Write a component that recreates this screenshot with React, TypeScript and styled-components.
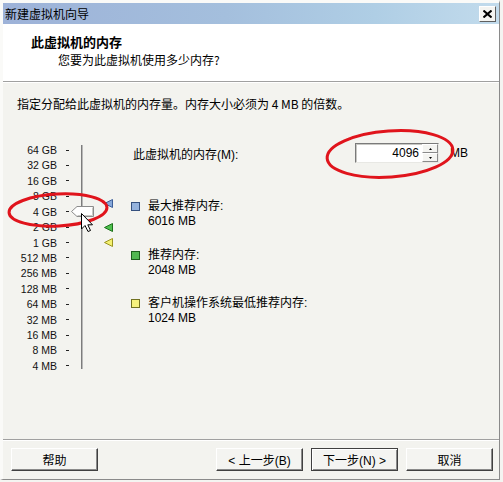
import React from "react";
import styled, { createGlobalStyle } from "styled-components";

const Global = createGlobalStyle`
  html, body { margin: 0; padding: 0; background: #f4f4f1; }
  body { font-family: "Liberation Sans", "Noto Sans CJK SC", sans-serif; font-size: 12px; color: #000; }
`;

const ROW_H = 15.43;
const TOP_EXP = 16; // 64 GB = 2^16 MB

const Window = styled.div`
  position: relative;
  box-sizing: border-box;
  width: 500px;
  height: 480px;
  display: flex;
  flex-direction: column;
  background: #f3f3ef;
  border-left: 3px solid #fafaf8;
  border-top: 3px solid #fafaf8;
  border-right: 1px solid #8a8a8a;
  border-bottom: 1px solid #8a8a8a;
`;

const TitleBar = styled.div`
  height: 21px;
  flex: none;
  display: flex;
  align-items: center;
  justify-content: space-between;
  padding: 0 3px 0 2px;
  background: linear-gradient(to right, #9db2d8 0%, #a4bfdd 45%, #afcee5 75%, #c2dbec 100%);
  font-family: "Noto Sans CJK SC", sans-serif;
  font-size: 12px;
  line-height: 21px;
`;

const CloseButton = styled.div`
  box-sizing: border-box;
  width: 17px;
  height: 16px;
  display: flex;
  align-items: center;
  justify-content: center;
  background: #f4f4f1;
  border-top: 1px solid #ffffff;
  border-left: 1px solid #ffffff;
  border-right: 1px solid #606060;
  border-bottom: 1px solid #606060;
`;

const Header = styled.div`
  height: 57px;
  flex: none;
  box-sizing: border-box;
  background: #ffffff;
  padding: 10px 0 0 28px;
  font-family: "Noto Sans CJK SC", sans-serif;
`;

const HeaderTitle = styled.div`
  font-weight: 700;
  font-size: 13px;
  line-height: 16px;
`;

const HeaderSub = styled.div`
  margin: 2px 0 0 27px;
  font-size: 12px;
  line-height: 16px;
`;

const Separator = styled.div`
  flex: none;
  height: 0;
  border-top: 1px solid #a0a0a0;
  border-bottom: 1px solid #ffffff;
`;

const Body = styled.div`
  flex: 1;
  padding: 13px 0 0 0;
`;

const Instruction = styled.div`
  padding-left: 14px;
  line-height: 16px;
  font-family: "Noto Sans CJK SC", sans-serif;
`;

const Main = styled.div`
  margin-top: 18px;
  display: grid;
  grid-template-columns: 128px 339px;
`;

const ScaleArea = styled.div`
  display: flex;
  padding-top: 12.3px;
`;

const Labels = styled.div`
  display: flex;
  flex-direction: column;
  width: 67px;
`;

const ScaleRow = styled.div`
  height: ${ROW_H}px;
  display: flex;
  align-items: center;
`;

const ScaleLabel = styled.span`
  width: 54px;
  text-align: right;
  font-size: 10.5px;
  color: #111;
`;

const Tick = styled.span`
  margin-left: 9px;
  width: 3px;
  height: 1px;
  background: #222;
`;

const Slider = styled.div`
  position: relative;
  width: 50px;
`;

const Rail = styled.div`
  margin: 2.7px 0 0 11px;
  width: 1px;
  height: 224px;
  background: #7c7c7c;
  border-right: 1px solid #b8b8b8;
`;

const Thumb = styled.svg`
  position: absolute;
  left: 1px;
  width: 23px;
  height: 11px;
`;

const Marker = styled.svg`
  position: absolute;
  left: 34px;
  width: 9px;
  height: 9px;
`;

const Right = styled.div`
  padding-top: 13px;
`;

const MemRow = styled.div`
  display: flex;
  align-items: center;
  height: 20px;
`;

const MemLabel = styled.span`
  flex: 1;
  padding-left: 2px;
  font-family: "Liberation Sans", "Noto Sans CJK SC", sans-serif;
`;

const SpinBox = styled.div`
  box-sizing: border-box;
  width: 84px;
  height: 20px;
  display: flex;
  background: #fff;
  border-top: 1px solid #7a7a7a;
  border-left: 1px solid #7a7a7a;
  border-right: 1px solid #e8e8e4;
  border-bottom: 1px solid #e8e8e4;
  box-shadow: inset 1px 1px 0 #c8c8c4;
`;

const SpinValue = styled.span`
  flex: 1;
  text-align: right;
  padding-right: 3px;
  line-height: 18px;
  font-size: 12px;
`;

const SpinButtons = styled.div`
  width: 16px;
  display: flex;
  flex-direction: column;
`;

const SpinButton = styled.div`
  box-sizing: border-box;
  flex: 1;
  display: flex;
  align-items: center;
  justify-content: center;
  background: #f4f4f1;
  border-top: 1px solid #ffffff;
  border-left: 1px solid #ffffff;
  border-right: 1px solid #8a8a8a;
  border-bottom: 1px solid #8a8a8a;
`;

const Unit = styled.span`
  margin-left: 11px;
  width: 20px;
`;

const Legend = styled.div`
  margin-top: 36px;
  display: flex;
  flex-direction: column;
  gap: 18.5px;
`;

const LegendItem = styled.div`
  display: grid;
  grid-template-columns: 17px auto;
  line-height: 15px;
`;

const Swatch = styled.span<{ $fill: string; $edge: string }>`
  box-sizing: border-box;
  width: 9px;
  height: 9px;
  margin-top: 3px;
  background: ${(p) => p.$fill};
  border: 1px solid ${(p) => p.$edge};
`;

const LegendTitle = styled.span`
  font-family: "Liberation Sans", "Noto Sans CJK SC", sans-serif;
`;

const LegendValue = styled.span`
  grid-column: 2;
`;

const Footer = styled.div`
  flex: none;
  height: 38px;
  box-sizing: border-box;
  padding: 7px 6px 0 8px;
  display: flex;
  gap: 8px;
`;

const Spacer = styled.div`
  flex: 1;
`;

const Button = styled.div<{ $default?: boolean }>`
  box-sizing: border-box;
  width: 87px;
  height: 23px;
  display: flex;
  align-items: center;
  justify-content: center;
  background: #f4f4f1;
  font-family: "Liberation Sans", "Noto Sans CJK SC", sans-serif;
  font-size: 12px;
  border-top: 1px solid ${(p) => (p.$default ? "#404040" : "#ffffff")};
  border-left: 1px solid ${(p) => (p.$default ? "#404040" : "#ffffff")};
  border-right: 1px solid #404040;
  border-bottom: 1px solid #404040;
  box-shadow: ${(p) =>
    p.$default
      ? "inset 1px 1px 0 #ffffff, inset -1px -1px 0 #8a8a8a"
      : "inset -1px -1px 0 #8a8a8a"};
`;

const Overlay = styled.svg`
  position: absolute;
  left: -3px;
  top: -3px;
  width: 503px;
  height: 482px;
  pointer-events: none;
`;

const scale = [
  "64 GB", "32 GB", "16 GB", "8 GB", "4 GB", "2 GB", "1 GB",
  "512 MB", "256 MB", "128 MB", "64 MB", "32 MB", "16 MB", "8 MB", "4 MB",
];

const posFor = (mb: number) => (TOP_EXP - Math.log2(mb) + 0.5) * ROW_H;

const markers = [
  { mb: 6016, fill: "#86a8da", edge: "#3c5e9a" },
  { mb: 2048, fill: "#4ec04e", edge: "#1c701c" },
  { mb: 1024, fill: "#f4f070", edge: "#9a9420" },
];

const legend = [
  { title: "最大推荐内存:", value: "6016 MB", fill: "#94b2dc", edge: "#34507e" },
  { title: "推荐内存:", value: "2048 MB", fill: "#52b852", edge: "#1e5e1e" },
  { title: "客户机操作系统最低推荐内存:", value: "1024 MB", fill: "#f6f27e", edge: "#707020" },
];

export default function App() {
  const memory = 4096;
  return (
    <>
      <Global />
      <Window>
        <TitleBar>
          <span>新建虚拟机向导</span>
          <CloseButton>
            <svg width="9" height="8" viewBox="0 0 9 8">
              <path d="M0.5 0.5 L8.5 7.5 M8.5 0.5 L0.5 7.5" stroke="#000" strokeWidth="2" />
            </svg>
          </CloseButton>
        </TitleBar>
        <Header>
          <HeaderTitle>此虚拟机的内存</HeaderTitle>
          <HeaderSub>您要为此虚拟机使用多少内存?</HeaderSub>
        </Header>
        <Separator />
        <Body>
          <Instruction>指定分配给此虚拟机的内存量。内存大小必须为 4 MB 的倍数。</Instruction>
          <Main>
            <ScaleArea>
              <Labels>
                {scale.map((s) => (
                  <ScaleRow key={s}>
                    <ScaleLabel>{s}</ScaleLabel>
                    <Tick />
                  </ScaleRow>
                ))}
              </Labels>
              <Slider>
                <Rail />
                {markers.map((m) => (
                  <Marker key={m.mb} viewBox="0 0 9 9" style={{ top: posFor(m.mb) - 4.5 }}>
                    <polygon points="0.5,4.5 8.5,0.5 8.5,8.5" fill={m.fill} stroke={m.edge} strokeWidth="1" />
                  </Marker>
                ))}
                <Thumb viewBox="0 0 23 11" style={{ top: posFor(memory) - 5.5 }}>
                  <polygon points="0.5,5.5 6,0.5 22.5,0.5 22.5,10.5 6,10.5" fill="#ffffff" stroke="#8c8c8c" strokeWidth="1" />
                  <polyline points="6.5,9.5 21.5,9.5 21.5,1.5" fill="none" stroke="#c8c8c4" strokeWidth="1" />
                </Thumb>
              </Slider>
            </ScaleArea>
            <Right>
              <MemRow>
                <MemLabel>此虚拟机的内存(M):</MemLabel>
                <SpinBox>
                  <SpinValue>{memory}</SpinValue>
                  <SpinButtons>
                    <SpinButton>
                      <svg width="3" height="2" viewBox="0 0 3 2"><polygon points="1.5,0 3,2 0,2" fill="#000" /></svg>
                    </SpinButton>
                    <SpinButton>
                      <svg width="3" height="2" viewBox="0 0 3 2"><polygon points="0,0 3,0 1.5,2" fill="#000" /></svg>
                    </SpinButton>
                  </SpinButtons>
                </SpinBox>
                <Unit>MB</Unit>
              </MemRow>
              <Legend>
                {legend.map((l) => (
                  <LegendItem key={l.title}>
                    <Swatch $fill={l.fill} $edge={l.edge} />
                    <LegendTitle>{l.title}</LegendTitle>
                    <LegendValue>{l.value}</LegendValue>
                  </LegendItem>
                ))}
              </Legend>
            </Right>
          </Main>
        </Body>
        <Separator />
        <Footer>
          <Button>帮助</Button>
          <Spacer />
          <Button>&lt; 上一步(B)</Button>
          <Button $default>下一步(N) &gt;</Button>
          <Button>取消</Button>
        </Footer>
        <Overlay viewBox="0 0 503 482">
          <ellipse cx="58" cy="210" rx="49" ry="16" fill="none" stroke="#e0141c" strokeWidth="3" transform="rotate(-3 58 210)" />
          <ellipse cx="390" cy="154" rx="63" ry="23" fill="none" stroke="#e0141c" strokeWidth="3" transform="rotate(-4 390 154)" />
          <path
            d="M81.5 213.5 L81.5 229 L85 225.5 L88 231.5 L90.5 230.5 L87.8 224.8 L92.5 224.8 Z"
            fill="#ffffff"
            stroke="#000000"
            strokeWidth="1"
            strokeLinejoin="miter"
          />
        </Overlay>
      </Window>
    </>
  );
}
